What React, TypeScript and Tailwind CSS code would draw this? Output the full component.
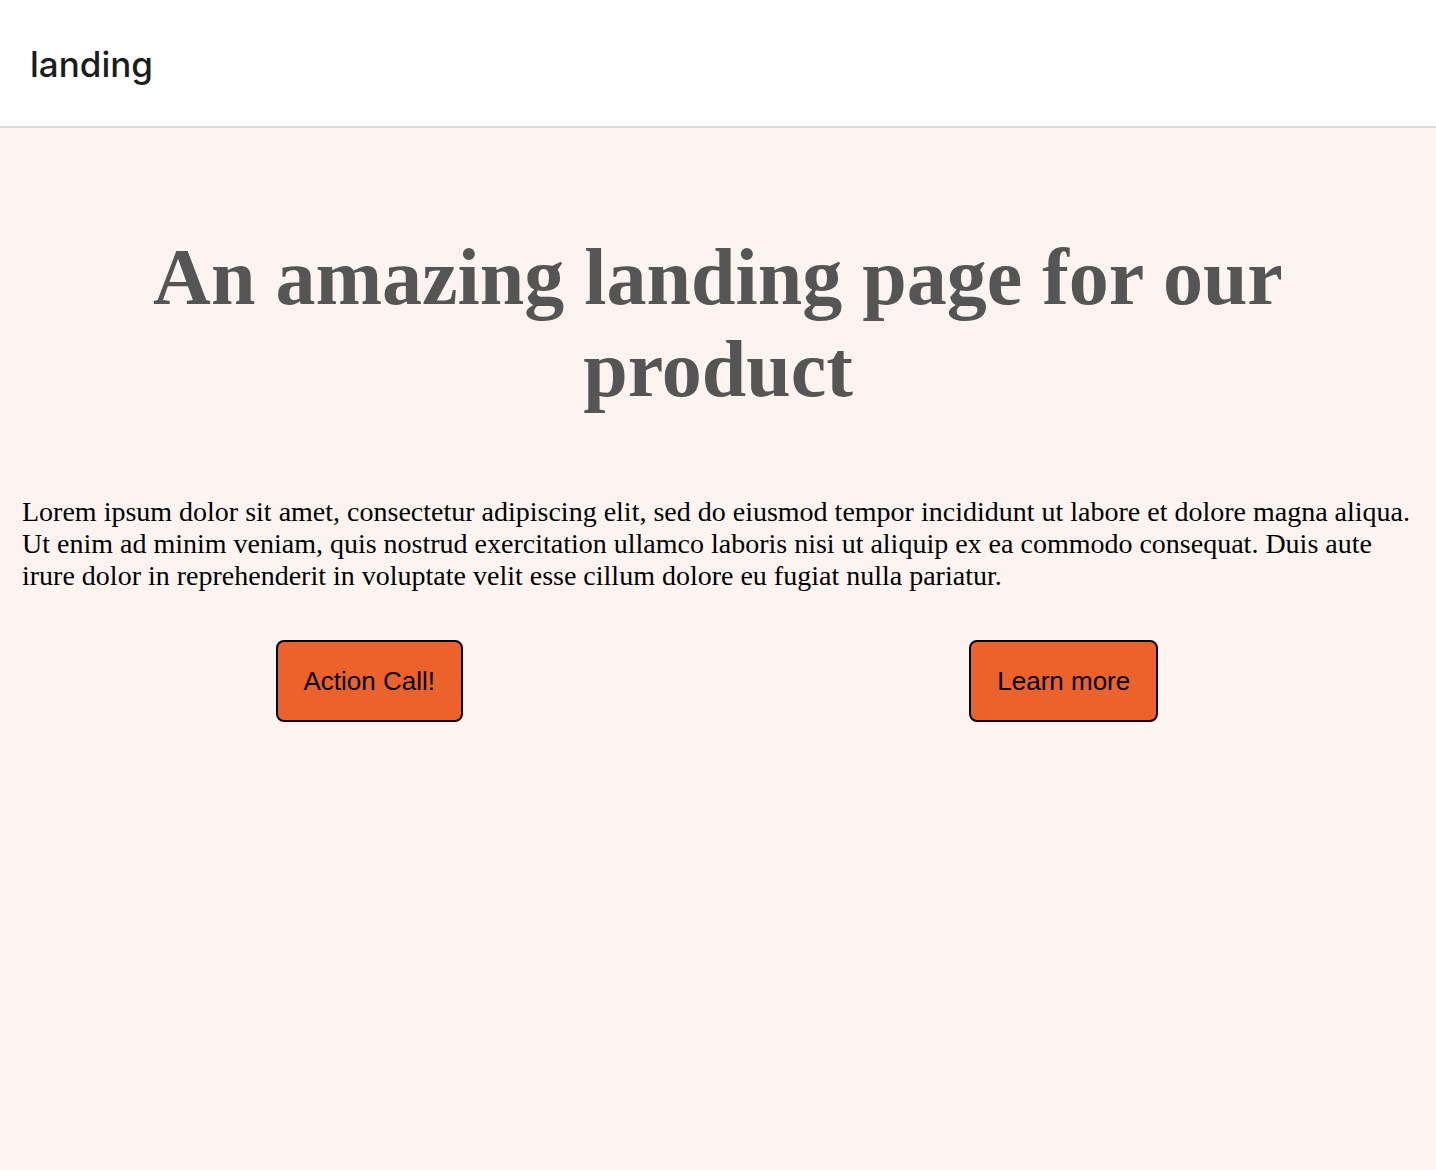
export default function App() {
  return (
    <div className="min-h-[1170px] bg-[#fdf4f1] flex flex-col">
      <header className="h-[128px] bg-white border-b-2 border-[#d9d9d9] flex items-center px-[30px]">
        <div className="text-[35px] font-medium text-[#1c1c1c] pt-[2px]" style={{ fontFamily: "Inter, sans-serif" }}>
          landing
        </div>
      </header>
      <main className="flex flex-col px-[22px]" style={{ fontFamily: '"Liberation Serif", serif' }}>
        <h1 className="mt-[103px] text-center font-bold text-[80px] leading-[92px] text-[#555555]">
          An amazing landing page for our product
        </h1>
        <p className="mt-[81px] text-[28px] leading-[32px] text-black">
          Lorem ipsum dolor sit amet, consectetur adipiscing elit, sed do eiusmod tempor incididunt ut labore et dolore magna aliqua. Ut enim ad minim veniam, quis nostrud exercitation ullamco laboris nisi ut aliquip ex ea commodo consequat. Duis aute irure dolor in reprehenderit in voluptate velit esse cillum dolore eu fugiat nulla pariatur.
        </p>
        <div className="mt-[48px] grid grid-cols-2 pr-[3px]" style={{ fontFamily: '"Liberation Sans", Arial, sans-serif' }}>
          <div className="flex justify-center">
            <button className="bg-[#ec622c] border-2 border-black rounded-[8px] px-[25.5px] py-[24px] text-[26px] leading-[30px] text-black">
              Action Call!
            </button>
          </div>
          <div className="flex justify-center">
            <button className="bg-[#ec622c] border-2 border-black rounded-[8px] px-[26px] py-[24px] text-[26px] leading-[30px] text-black">
              Learn more
            </button>
          </div>
        </div>
      </main>
    </div>
  );
}
